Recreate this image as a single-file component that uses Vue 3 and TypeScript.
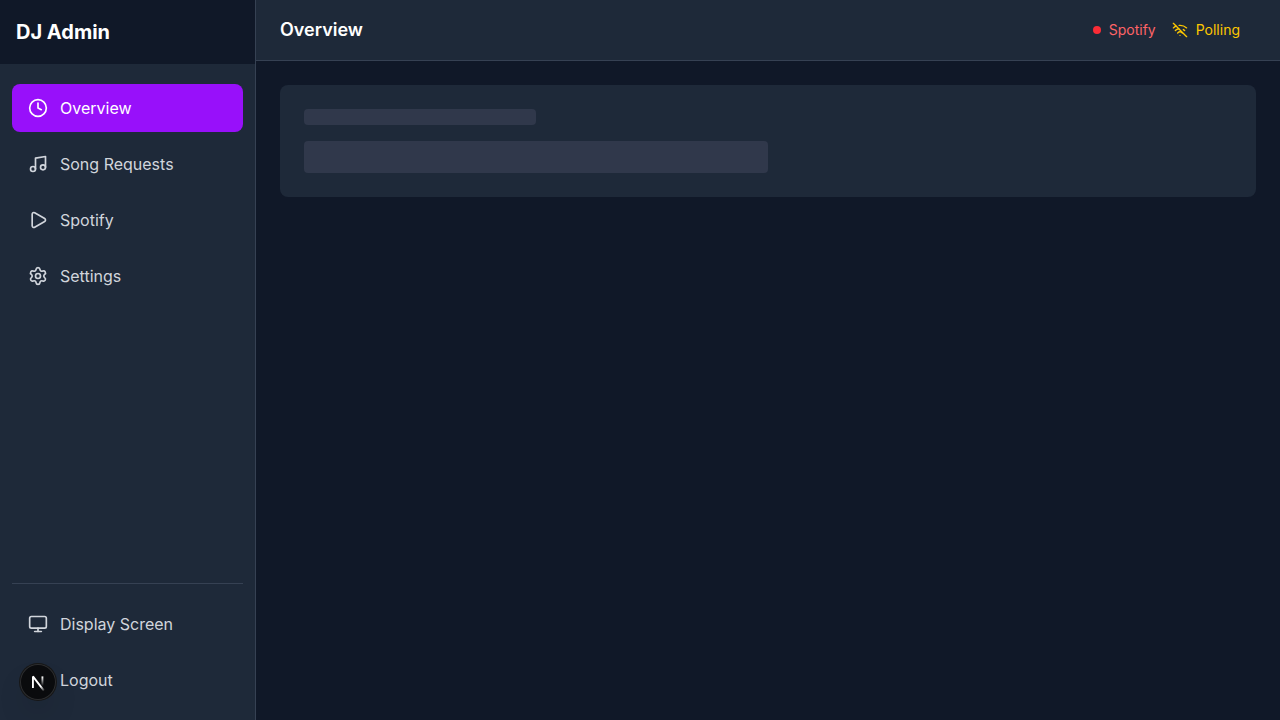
<script setup lang="ts">
interface NavItem {
  label: string
  paths: string[]
  circles?: [number, number, number][]
  rect?: boolean
  active?: boolean
}

const mainItems: NavItem[] = [
  { label: 'Overview', paths: ['M12 6v6l4 2'], circles: [[12, 12, 10]], active: true },
  { label: 'Song Requests', paths: ['M9 18V5l12-2v13'], circles: [[6, 18, 3], [18, 16, 3]] },
  {
    label: 'Spotify',
    paths: ['M5 5a2 2 0 0 1 3.008-1.728l11.997 6.998a2 2 0 0 1 .003 3.458l-12 7A2 2 0 0 1 5 19z'],
  },
  {
    label: 'Settings',
    paths: [
      'M9.671 4.136a2.34 2.34 0 0 1 4.659 0 2.34 2.34 0 0 0 3.319 1.915 2.34 2.34 0 0 1 2.33 4.033 2.34 2.34 0 0 0 0 3.831 2.34 2.34 0 0 1-2.33 4.033 2.34 2.34 0 0 0-3.319 1.915 2.34 2.34 0 0 1-4.659 0 2.34 2.34 0 0 0-3.32-1.915 2.34 2.34 0 0 1-2.33-4.033 2.34 2.34 0 0 0 0-3.831A2.34 2.34 0 0 1 6.35 6.051a2.34 2.34 0 0 0 3.319-1.915',
    ],
    circles: [[12, 12, 3]],
  },
]

const footerItems: NavItem[] = [
  { label: 'Display Screen', paths: ['M8 21h8', 'M12 17v4'], rect: true },
  { label: 'Logout', paths: ['m16 17 5-5-5-5', 'M21 12H9', 'M9 21H5a2 2 0 0 1-2-2V5a2 2 0 0 1 2-2h4'] },
]

const groups = [
  { name: 'primary', items: mainItems },
  { name: 'secondary', items: footerItems },
]

const wifiOff = [
  'M12 20h.01',
  'M8.5 16.429a5 5 0 0 1 7 0',
  'M5 12.859a10 10 0 0 1 5.17-2.69',
  'M19 12.859a10 10 0 0 0-2.007-1.523',
  'M2 8.82a15 15 0 0 1 4.177-2.643',
  'M22 8.82a15 15 0 0 0-11.288-3.764',
  'm2 2 20 20',
]
</script>

<template>
  <div class="app">
    <aside class="sidebar">
      <div class="brand">DJ Admin</div>
      <nav v-for="group in groups" :key="group.name" class="nav" :class="group.name">
        <a v-for="item in group.items" :key="item.label" class="item" :class="{ active: item.active }">
          <svg class="icon" viewBox="0 0 24 24">
            <rect v-if="item.rect" x="2" y="3" width="20" height="14" rx="2" />
            <path v-for="d in item.paths" :key="d" :d="d" />
            <circle v-for="(c, i) in item.circles" :key="i" :cx="c[0]" :cy="c[1]" :r="c[2]" />
          </svg>
          <span>{{ item.label }}</span>
        </a>
      </nav>
    </aside>

    <div class="content">
      <header class="topbar">
        <h1>Overview</h1>
        <div class="statuses">
          <div class="status offline"><i class="dot"></i><span>Spotify</span></div>
          <div class="status polling">
            <svg class="icon small" viewBox="0 0 24 24">
              <path v-for="d in wifiOff" :key="d" :d="d" />
            </svg>
            <span>Polling</span>
          </div>
        </div>
      </header>
      <main class="main">
        <section class="card">
          <div class="bone short"></div>
          <div class="bone tall"></div>
        </section>
      </main>
    </div>

    <div class="badge">
      <svg viewBox="0 0 36 36" width="36" height="36" fill="none">
        <defs>
          <linearGradient id="diag" x1="9.956" y1="11.123" x2="15.478" y2="17.967" gradientUnits="userSpaceOnUse">
            <stop stop-color="white" />
            <stop offset="0.7" stop-color="white" stop-opacity="0" />
          </linearGradient>
          <linearGradient id="stem" x1="11.822" y1="1.4" x2="11.791" y2="10.5" gradientUnits="userSpaceOnUse">
            <stop stop-color="white" />
            <stop offset="1" stop-color="white" stop-opacity="0" />
          </linearGradient>
        </defs>
        <g transform="translate(10.6 11.4)">
          <path d="M13.3 15.2 2.34 1v11.6" stroke="url(#diag)" stroke-width="1.86" stroke-linejoin="bevel" />
          <path d="M11.825 1v11.6" stroke="url(#stem)" stroke-width="1.86" />
        </g>
      </svg>
    </div>
  </div>
</template>

<style>
body {
  background: #101828;
}
</style>

<style scoped>
.app {
  display: flex;
  height: 100vh;
  overflow: hidden;
  background: #101828;
  color: #fff;
  font: 16px/24px Inter, 'Liberation Sans', sans-serif;
}
.sidebar {
  box-sizing: border-box;
  width: 256px;
  flex: none;
  display: flex;
  flex-direction: column;
  background: #1e2939;
  border-right: 1px solid #364153;
}
.brand {
  display: flex;
  align-items: center;
  height: 64px;
  padding-left: 16px;
  background: #101828;
  font-size: 20px;
  line-height: 28px;
  font-weight: 700;
}
.nav {
  display: flex;
  flex-direction: column;
  gap: 8px;
}
.primary {
  flex: 1;
  padding: 20px 12px;
}
.secondary {
  margin: 0 12px;
  padding: 16px 0;
  border-top: 1px solid #364153;
}
.item {
  display: flex;
  align-items: center;
  gap: 12px;
  padding: 12px 16px;
  border-radius: 8px;
  color: #d1d5dc;
}
.active {
  background: #9810fa;
  color: #fff;
}
.icon {
  width: 20px;
  height: 20px;
  flex: none;
  fill: none;
  stroke: currentColor;
  stroke-width: 2;
  stroke-linecap: round;
  stroke-linejoin: round;
}
.small {
  width: 16px;
  height: 16px;
}
.content {
  flex: 1;
  min-width: 0;
}
.topbar {
  display: flex;
  align-items: center;
  justify-content: space-between;
  padding: 16px 40px 16px 24px;
  background: #1e2939;
  border-bottom: 1px solid #364153;
}
h1 {
  margin: 0;
  font-size: 18px;
  line-height: 28px;
  font-weight: 600;
}
.statuses {
  display: flex;
  gap: 16px;
  font-size: 14px;
  line-height: 20px;
}
.status {
  display: flex;
  align-items: center;
  gap: 8px;
}
.offline {
  color: #ff6467;
}
.polling {
  color: #fdc700;
}
.dot {
  width: 8px;
  height: 8px;
  border-radius: 50%;
  background: #fb2c36;
}
.main {
  padding: 24px;
}
.card {
  display: flex;
  flex-direction: column;
  gap: 16px;
  padding: 24px;
  border-radius: 8px;
  background: #1e2939;
}
.bone {
  border-radius: 4px;
  background: #30384b;
}
.short {
  width: 25%;
  height: 16px;
}
.tall {
  width: 50%;
  height: 32px;
}
.badge {
  position: absolute;
  left: 20px;
  bottom: 20px;
  width: 36px;
  height: 36px;
  border-radius: 50%;
  background: #0a0b0d;
  box-shadow:
    0 0 0 1px #171717,
    inset 0 0 0 1px #2d2e30,
    0 16px 32px -8px rgba(0, 0, 0, 0.24);
}
.badge svg {
  display: block;
}
</style>
